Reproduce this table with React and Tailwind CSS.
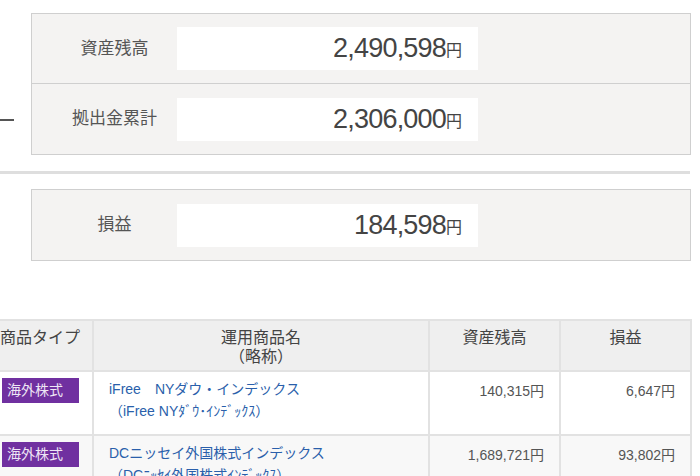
import React from "react";

const font = { fontFamily: '"Liberation Sans", "Noto Sans CJK JP", sans-serif' };

const SummaryRow = ({ label, value, last }) => (
    <div className={`flex items-center h-[70px] ${last ? "" : "border-b border-[#cfcfcf]"}`}>
        <div className="w-[145px] pl-[20px] text-center text-[17px] text-[#555]">{label}</div>
        <div className="w-[301px] h-[43px] bg-white flex items-center justify-end pr-[16px] text-[#444]">
            <span className="text-[27px] tracking-[-0.8px]">{value}</span>
            <span className="text-[16px] mt-[5px]">円</span>
        </div>
    </div>
);

const funds = [
    {
        type: "海外株式",
        name: "iFree　NYダウ・インデックス",
        short: "（iFree NYﾀﾞｳ･ｲﾝﾃﾞｯｸｽ）",
        balance: "140,315円",
        profit: "6,647円",
        bg: "bg-white",
    },
    {
        type: "海外株式",
        name: "DCニッセイ外国株式インデックス",
        short: "（DCﾆｯｾｲ外国株式ｲﾝﾃﾞｯｸｽ）",
        balance: "1,689,721円",
        profit: "93,802円",
        bg: "bg-[#f8f8f8]",
    },
];

export default function App() {
    return (
        <div className="w-[700px] h-[476px] overflow-hidden bg-white" style={font}>
            {/* 資産残高 − 拠出金累計 */}
            <div className="flex pt-[13px]">
                <div className="w-[31px] pt-[106px]">
                    <div className="w-[14px] h-[2px] bg-[#555]" />
                </div>
                <div className="w-[660px] border border-[#cfcfcf] bg-[#f4f3f2]">
                    <SummaryRow label="資産残高" value="2,490,598" />
                    <SummaryRow label="拠出金累計" value="2,306,000" last />
                </div>
            </div>

            <div className="mt-[16px] w-[690px] h-[3px] bg-[#dedede]" />

            {/* 損益 */}
            <div className="mt-[15px] ml-[31px] w-[660px] border border-[#cfcfcf] bg-[#f4f3f2]">
                <SummaryRow label="損益" value="184,598" last />
            </div>

            {/* 商品一覧 */}
            <table className="mt-[58px] ml-[-10px] w-[700px] border-collapse table-fixed text-[#444]">
                <colgroup>
                    <col className="w-[102px]" />
                    <col className="w-[336px]" />
                    <col className="w-[131px]" />
                    <col className="w-[131px]" />
                </colgroup>
                <thead>
                    <tr className="bg-[#efefef] h-[51px]">
                        <th className="border-2 border-[#e2e2e2] align-top pt-[7px] pl-[8px] text-left font-normal text-[16px] leading-[19px] whitespace-nowrap">商品タイプ</th>
                        <th className="border-2 border-[#e2e2e2] align-top pt-[7px] font-normal text-[16px] leading-[19px]">
                            運用商品名<br />（略称）
                        </th>
                        <th className="border-2 border-[#e2e2e2] align-top pt-[7px] font-normal text-[16px] leading-[19px]">資産残高</th>
                        <th className="border-2 border-[#e2e2e2] align-top pt-[7px] font-normal text-[16px] leading-[19px]">損益</th>
                    </tr>
                </thead>
                <tbody>
                    {funds.map((f) => (
                        <tr key={f.name} className={`${f.bg} h-[64px]`}>
                            <td className="border-2 border-[#e2e2e2] align-top pt-[6px] pl-[10px]">
                                <div className="w-[77px] h-[25px] bg-[#7030a0] text-[#eee6f5] text-[14px] leading-[25px] pl-[5px]">
                                    {f.type}
                                </div>
                            </td>
                            <td className="border-2 border-[#e2e2e2] align-top pt-[6px] pl-[15px] text-[14px] leading-[22px] text-[#2a5fab] whitespace-nowrap">
                                <div>{f.name}</div>
                                <div>{f.short}</div>
                            </td>
                            <td className="border-2 border-[#e2e2e2] align-top pt-[10px] pr-[15px] text-right text-[14px] leading-[18px] text-[#555]">
                                {f.balance}
                            </td>
                            <td className="border-2 border-[#e2e2e2] align-top pt-[10px] pr-[15px] text-right text-[14px] leading-[18px] text-[#555]">
                                {f.profit}
                            </td>
                        </tr>
                    ))}
                </tbody>
            </table>
        </div>
    );
}
